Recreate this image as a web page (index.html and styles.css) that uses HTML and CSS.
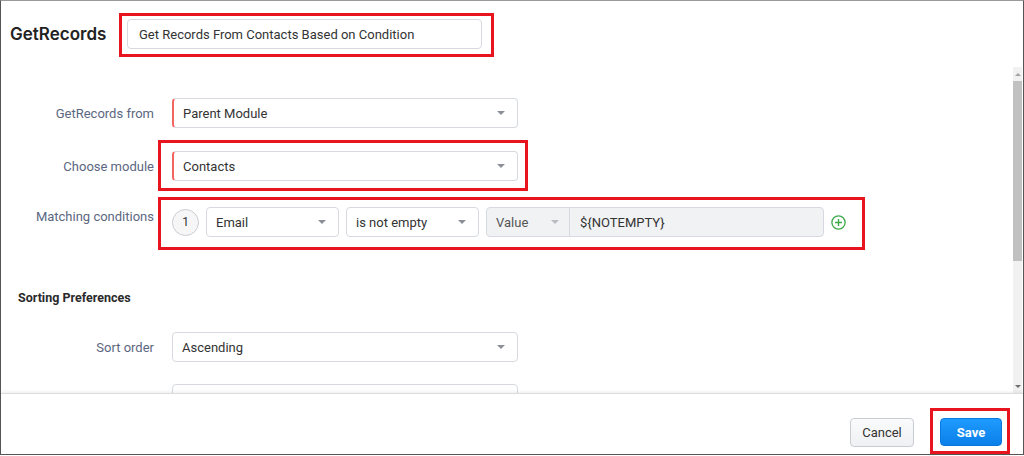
FILE: index.html
```html
<!DOCTYPE html>
<html>
<head>
<meta charset="utf-8">
<link rel="stylesheet" href="styles.css">
</head>
<body>
<div class="frame">
  <header class="head">
    <h1 class="title">GetRecords</h1>
    <div class="annot annot-name">
      <div class="field name-field">Get Records From Contacts Based on Condition</div>
    </div>
  </header>

  <div class="middle">
    <main class="scroll">
      <div class="row row-1">
        <label class="lbl">GetRecords from</label>
        <div class="field select accent"><span>Parent Module</span><i class="caret"></i></div>
      </div>
      <div class="row row-2">
        <label class="lbl">Choose module</label>
        <div class="annot annot-module">
          <div class="field select accent"><span>Contacts</span><i class="caret"></i></div>
        </div>
      </div>
      <div class="row row-3 top">
        <label class="lbl lbl-top">Matching conditions</label>
        <div class="annot annot-cond">
          <div class="cond">
            <span class="num">1</span>
            <div class="field select small"><span>Email</span><i class="caret"></i></div>
            <div class="field select small"><span>is not empty</span><i class="caret"></i></div>
            <div class="value-group">
              <div class="vg-type"><span>Value</span><i class="caret light"></i></div>
              <div class="vg-input">${NOTEMPTY}</div>
            </div>
            <svg class="plus" width="15" height="15" viewBox="0 0 15 15">
              <circle cx="7.5" cy="7.5" r="6.6" fill="none" stroke="#3daa4a" stroke-width="1.3"/>
              <path d="M7.5 4v7M4 7.5h7" stroke="#3daa4a" stroke-width="1.4"/>
            </svg>
          </div>
        </div>
      </div>

      <h2 class="section">Sorting Preferences</h2>

      <div class="row row-4">
        <label class="lbl">Sort order</label>
        <div class="field select"><span>Ascending</span><i class="caret"></i></div>
      </div>
      <div class="row row-5">
        <span class="lbl"></span>
        <div class="field select"></div>
      </div>
    </main>
    <div class="vbar">
      <div class="vbtn up"></div>
      <div class="thumb"></div>
      <div class="track"></div>
      <div class="vbtn down"></div>
    </div>
  </div>

  <footer class="foot">
    <button class="btn cancel">Cancel</button>
    <div class="annot annot-save">
      <button class="btn save">Save</button>
    </div>
  </footer>
</div>
</body>
</html>
```

FILE: styles.css
```css
* { box-sizing: border-box; }
html, body { margin: 0; padding: 0; background: #fff; }
body { font-family: Roboto, "Liberation Sans", Arial, sans-serif; color: #333; }

.frame {
  width: 1024px;
  height: 455px;
  border: 1px solid #555;
  border-top-color: #9a9a9a;
  display: flex;
  flex-direction: column;
  overflow: hidden;
  background: #fff;
}

/* header */
.head {
  height: 66px;
  flex: none;
  display: flex;
  align-items: flex-start;
  padding: 18px 0 0 9px;
}
.title {
  margin: 0;
  font-family: Inter, Roboto, sans-serif;
  font-size: 17px;
  font-weight: 600;
  color: #222;
  line-height: 30px;
  width: 117px;
}
.name-field {
  width: 355px;
  height: 30px;
  padding-left: 11px;
  border-left: 2px solid #f3655f;
  color: #3a3f48;
}

/* generic field */
.field {
  border: 1px solid #d6dae0;
  border-radius: 4px;
  background: #fff;
  font-size: 13px;
  color: #333;
  display: flex;
  align-items: center;
  height: 30px;
}
.select {
  width: 346px;
  padding: 0 12px 0 9px;
  justify-content: space-between;
}
.accent { border-left: 2px solid #f3655f; }
.caret {
  width: 0; height: 0;
  border-left: 4px solid transparent;
  border-right: 4px solid transparent;
  border-top: 4px solid #8b8f97;
}
.caret.light { border-top-color: #b9bcc2; }

/* annotation boxes (overlay) */
.annot { position: relative; }
.annot::after {
  content: "";
  position: absolute;
  border: 3px solid #e8141e;
  pointer-events: none;
}
.annot-name::after { left: -8px; right: -12px; top: -6px; bottom: -8px; }
.annot-module::after { left: -14px; right: -10px; top: -11px; bottom: -10px; }
.annot-cond::after { left: -14px; right: -19px; top: -10px; bottom: -13px; }
.annot-save::after { left: -10px; right: -8px; top: -10px; bottom: -8px; }

/* middle: content + scrollbar */
.middle {
  flex: 1;
  min-height: 0;
  display: flex;
}
.scroll {
  flex: 1;
  overflow: hidden;
  padding-top: 31px;
}
.vbar {
  width: 9px;
  margin-right: 1px;
  flex: none;
  display: flex;
  flex-direction: column;
  background: #f1f1f1;
}
.vbtn {
  height: 14px;
  flex: none;
  display: flex;
  justify-content: center;
  align-items: center;
}
.vbtn::before {
  content: "";
  width: 0; height: 0;
  border-left: 3px solid transparent;
  border-right: 3px solid transparent;
}
.vbtn.up::before { border-bottom: 3px solid #a3a3a3; }
.vbtn.down::before { border-top: 3px solid #6e6e6e; }
.thumb {
  height: 180px;
  flex: none;
  background: #c1c1c1;
}
.track { flex: 1; }

.row {
  display: flex;
  align-items: center;
}
.row.top { align-items: flex-start; }
.lbl {
  width: 153px;
  margin-right: 18px;
  text-align: right;
  font-size: 13px;
  color: #5b6781;
  flex: none;
}
.lbl-top { padding-top: 2px; }
.row-2 { margin-top: 23px; }
.row-3 { margin-top: 26px; }
.row-4 { margin-top: 26px; }
.row-5 { margin-top: 22px; }

.section {
  margin: 53px 0 0 17px;
  font-size: 12.5px;
  font-weight: 700;
  color: #2a2a2a;
  line-height: 16px;
}

/* conditions */
.cond {
  display: flex;
  align-items: center;
  gap: 7px;
}
.num {
  width: 27px; height: 27px;
  border-radius: 50%;
  border: 1px solid #c9ccd1;
  background: #f6f6f6;
  font-size: 12px;
  color: #333;
  display: flex;
  align-items: center;
  justify-content: center;
}
.select.small { width: 133px; }
.value-group {
  width: 338px;
  height: 30px;
  display: flex;
  border: 1px solid #d6dae0;
  border-radius: 4px;
  background: #f1f2f4;
  font-size: 13px;
  color: #333;
}
.vg-type {
  width: 83px;
  padding: 0 10px 0 9px;
  display: flex;
  align-items: center;
  justify-content: space-between;
  border-right: 1px solid #d6dae0;
  color: #555;
}
.vg-input {
  padding-left: 10px;
  display: flex;
  align-items: center;
}

/* footer */
.foot {
  height: 61px;
  flex: none;
  border-top: 1px solid #dcdcdc;
  box-shadow: 0 -1px 3px rgba(0,0,0,0.08);
  display: flex;
  justify-content: flex-end;
  align-items: flex-start;
  padding: 24px 21px 0 0;
  gap: 26px;
  position: relative;
}
.btn {
  font-family: Roboto, "Liberation Sans", Arial, sans-serif;
  font-size: 13px;
  border-radius: 4px;
  cursor: pointer;
}
.cancel {
  width: 64px; height: 29px;
  background: linear-gradient(#fafbfc, #eef0f3);
  border: 1px solid #c9ccd2;
  color: #333;
}
.save {
  width: 62px; height: 28px;
  background: linear-gradient(#1f9bff, #0a7fe8);
  border: 1px solid #0a78dc;
  color: #fff;
  font-weight: 700;
}
```
